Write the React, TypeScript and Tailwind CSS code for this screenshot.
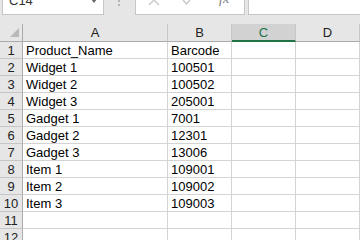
const data: [string, string][] = [
  ["Product_Name", "Barcode"],
  ["Widget 1", "100501"],
  ["Widget 2", "100502"],
  ["Widget 3", "205001"],
  ["Gadget 1", "7001"],
  ["Gadget 2", "12301"],
  ["Gadget 3", "13006"],
  ["Item 1", "109001"],
  ["Item 2", "109002"],
  ["Item 3", "109003"],
  ["", ""],
  ["", ""],
];

const cols = ["A", "B", "C", "D"];

export default function App() {
  return (
    <div className="w-[360px] h-[240px] overflow-hidden bg-[#e6e6e6] font-['Liberation_Sans',Arial,sans-serif] text-[13px] text-black">
      {/* formula bar */}
      <div className="flex items-start h-[24px] -mt-[9px]">
        <div className="ml-[2px] w-[102px] h-[24px] bg-white border border-t-0 border-[#c6c6c6] flex items-start">
          <span className="pl-[6px] pt-[3px] leading-[13px] text-[#333]">C14</span>
          <svg className="ml-auto mr-[6px] mt-[8px]" width="6" height="4" viewBox="0 0 6 4">
            <path d="M0 0 L6 0 L3 4 Z" fill="#666" />
          </svg>
        </div>
        <div className="ml-[14px] mt-[5px] flex flex-col gap-[2px]">
          <div className="w-[2px] h-[2px] bg-[#b4b4b4]" />
          <div className="w-[2px] h-[2px] bg-[#b4b4b4]" />
          <div className="w-[2px] h-[2px] bg-[#b4b4b4]" />
        </div>
        <div className="ml-[15px] w-[110px] h-[24px] bg-white border border-t-0 border-[#c6c6c6] flex items-start">
          <svg className="ml-[12px] mt-[3px]" width="12" height="12" viewBox="0 0 12 12">
            <path d="M1 1 L11 11 M11 1 L1 11" stroke="#c8c8c8" strokeWidth="1.4" fill="none" />
          </svg>
          <svg className="ml-[22px] mt-[4px]" width="12" height="10" viewBox="0 0 12 10">
            <path d="M1 5 L4.5 9 L11 1" stroke="#c8c8c8" strokeWidth="1.4" fill="none" />
          </svg>
          <span className="ml-[25px] pt-[1px] leading-[14px] text-[14px] italic font-['Liberation_Serif',serif] text-[#7a7a7a]">fx</span>
        </div>
        <div className="ml-[3px] flex-1 h-[24px] bg-white border-l border-b border-[#c6c6c6]" />
      </div>

      {/* grid */}
      <div className="mt-[9px] grid grid-cols-[23px_145px_64px_64px_64px] grid-rows-[18px_repeat(12,17px)]">
        <div className="bg-[#e6e6e6] border-r border-b border-[#ababab] relative">
          <svg className="absolute left-[10px] top-[4px]" width="9" height="9" viewBox="0 0 9 9">
            <path d="M9 0 L9 9 L0 9 Z" fill="#b9b9b9" />
          </svg>
        </div>
        {cols.map((c) =>
          c === "C" ? (
            <div
              key={c}
              className="bg-[#d2d2d2] border-r border-[#c6c6c6] border-b-2 border-b-[#217346] flex items-center justify-center leading-[13px] text-[#217346]"
            >
              {c}
            </div>
          ) : (
            <div
              key={c}
              className="bg-[#e6e6e6] border-r border-[#c6c6c6] border-b border-b-[#ababab] flex items-center justify-center leading-[13px] text-[#222]"
            >
              {c}
            </div>
          )
        )}
        {data.map((r, i) => [
          <div
            key={`h${i}`}
            className="bg-[#e6e6e6] border-r border-r-[#ababab] border-b border-b-[#c6c6c6] flex items-center justify-center leading-[13px] text-[#222]"
          >
            {i + 1}
          </div>,
          <div key={`a${i}`} className="bg-white border-r border-b border-[#d4d4d4] pl-[3px] pt-[1px] leading-[16px] whitespace-nowrap overflow-hidden">
            {r[0]}
          </div>,
          <div key={`b${i}`} className="bg-white border-r border-b border-[#d4d4d4] pl-[3px] pt-[1px] leading-[16px] whitespace-nowrap overflow-hidden">
            {r[1]}
          </div>,
          <div key={`c${i}`} className="bg-white border-r border-b border-[#d4d4d4]" />,
          <div key={`d${i}`} className="bg-white border-r border-b border-[#d4d4d4]" />,
        ])}
      </div>
    </div>
  );
}
